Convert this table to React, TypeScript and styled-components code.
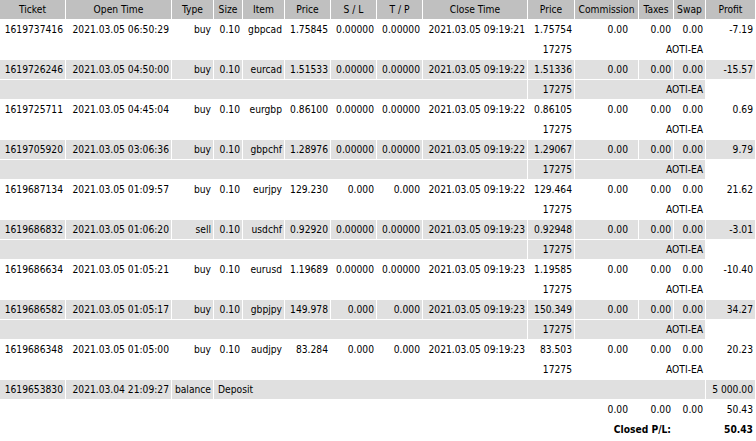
import styled, { createGlobalStyle } from "styled-components";

const GlobalStyle = createGlobalStyle`
  html, body {
    margin: 0;
    padding: 0;
    background: #ffffff;
  }
  body {
    overflow: hidden;
  }
`;

type Trade = {
  ticket: string;
  openTime: string;
  type: string;
  size: string;
  item: string;
  price: string;
  sl: string;
  tp: string;
  closeTime: string;
  closePrice: string;
  profit: string;
};

// widths taken from the statement header (px)
const COLS = [65, 105, 41, 28, 41, 45, 45, 45, 104, 46, 63, 34, 31, 49];

const HEAD = [
  "Ticket",
  "Open Time",
  "Type",
  "Size",
  "Item",
  "Price",
  "S / L",
  "T / P",
  "Close Time",
  "Price",
  "Commission",
  "Taxes",
  "Swap",
  "Profit",
];

const trades: Trade[] = [
  { ticket: "1619737416", openTime: "2021.03.05 06:50:29", type: "buy", size: "0.10", item: "gbpcad", price: "1.75845", sl: "0.00000", tp: "0.00000", closeTime: "2021.03.05 09:19:21", closePrice: "1.75754", profit: "-7.19" },
  { ticket: "1619726246", openTime: "2021.03.05 04:50:00", type: "buy", size: "0.10", item: "eurcad", price: "1.51533", sl: "0.00000", tp: "0.00000", closeTime: "2021.03.05 09:19:22", closePrice: "1.51336", profit: "-15.57" },
  { ticket: "1619725711", openTime: "2021.03.05 04:45:04", type: "buy", size: "0.10", item: "eurgbp", price: "0.86100", sl: "0.00000", tp: "0.00000", closeTime: "2021.03.05 09:19:22", closePrice: "0.86105", profit: "0.69" },
  { ticket: "1619705920", openTime: "2021.03.05 03:06:36", type: "buy", size: "0.10", item: "gbpchf", price: "1.28976", sl: "0.00000", tp: "0.00000", closeTime: "2021.03.05 09:19:22", closePrice: "1.29067", profit: "9.79" },
  { ticket: "1619687134", openTime: "2021.03.05 01:09:57", type: "buy", size: "0.10", item: "eurjpy", price: "129.230", sl: "0.000", tp: "0.000", closeTime: "2021.03.05 09:19:22", closePrice: "129.464", profit: "21.62" },
  { ticket: "1619686832", openTime: "2021.03.05 01:06:20", type: "sell", size: "0.10", item: "usdchf", price: "0.92920", sl: "0.00000", tp: "0.00000", closeTime: "2021.03.05 09:19:23", closePrice: "0.92948", profit: "-3.01" },
  { ticket: "1619686634", openTime: "2021.03.05 01:05:21", type: "buy", size: "0.10", item: "eurusd", price: "1.19689", sl: "0.00000", tp: "0.00000", closeTime: "2021.03.05 09:19:23", closePrice: "1.19585", profit: "-10.40" },
  { ticket: "1619686582", openTime: "2021.03.05 01:05:17", type: "buy", size: "0.10", item: "gbpjpy", price: "149.978", sl: "0.000", tp: "0.000", closeTime: "2021.03.05 09:19:23", closePrice: "150.349", profit: "34.27" },
  { ticket: "1619686348", openTime: "2021.03.05 01:05:00", type: "buy", size: "0.10", item: "audjpy", price: "83.284", sl: "0.000", tp: "0.000", closeTime: "2021.03.05 09:19:23", closePrice: "83.503", profit: "20.23" },
];

const App = () => {
  return (
    <>
      <GlobalStyle />
      <Table>
        <colgroup>
          {COLS.map((w, i) => (
            <col key={i} style={{ width: w }} />
          ))}
        </colgroup>
        <thead>
          <Row>
            {HEAD.map((h, i) => (
              <HeadCell key={i}>{h}</HeadCell>
            ))}
          </Row>
        </thead>
        <tbody>
          {trades.map((t, i) => {
            const shade = i % 2 === 1;
            return [
              <Row key={t.ticket} $shade={shade}>
                <Cell>{t.ticket}</Cell>
                <Cell>{t.openTime}</Cell>
                <Cell>{t.type}</Cell>
                <Cell>{t.size}</Cell>
                <Cell>{t.item}</Cell>
                <Cell>{t.price}</Cell>
                <Cell>{t.sl}</Cell>
                <Cell>{t.tp}</Cell>
                <Cell>{t.closeTime}</Cell>
                <Cell>{t.closePrice}</Cell>
                <Cell $wide>0.00</Cell>
                <Cell>0.00</Cell>
                <Cell>0.00</Cell>
                <Cell>{t.profit}</Cell>
              </Row>,
              <Row key={t.ticket + "-c"} $shade={shade}>
                <Cell colSpan={9} />
                <Cell>17275</Cell>
                <Cell colSpan={3}>AOTI-EA</Cell>
                <Cell $bare />
              </Row>,
            ];
          })}
          <Row $shade>
            <Cell>1619653830</Cell>
            <Cell>2021.03.04 21:09:27</Cell>
            <Cell>balance</Cell>
            <Cell colSpan={10} $left>
              Deposit
            </Cell>
            <Cell>5 000.00</Cell>
          </Row>
          <Row>
            <Cell colSpan={10} />
            <Cell $wide>0.00</Cell>
            <Cell>0.00</Cell>
            <Cell>0.00</Cell>
            <Cell>50.43</Cell>
          </Row>
          <Row>
            <Cell colSpan={10} />
            <Cell colSpan={2} $bold>
              Closed P/L:
            </Cell>
            <Cell />
            <Cell $bold>50.43</Cell>
          </Row>
        </tbody>
      </Table>
    </>
  );
};

export default App;

const Table = styled.table`
  table-layout: fixed;
  width: 757px;
  margin: -1px 0 0 -1px;
  border-collapse: separate;
  border-spacing: 1px;
  background: #ffffff;
  font-family: "DejaVu Sans Condensed", "DejaVu Sans", "Liberation Sans", sans-serif;
  font-stretch: condensed;
  font-size: 10.2px;
  color: #000000;
`;

const Row = styled.tr<{ $shade?: boolean }>`
  background: ${({ $shade }) => ($shade ? "#e0e0e0" : "transparent")};
`;

const HeadCell = styled.th`
  height: 19px;
  padding: 0 2px;
  background: #c0c0c0;
  font-weight: normal;
  text-align: center;
  white-space: nowrap;
  overflow: hidden;
`;

const Cell = styled.td<{ $left?: boolean; $bold?: boolean; $wide?: boolean; $bare?: boolean }>`
  height: 19px;
  padding: 0 ${({ $wide }) => ($wide ? "10px" : "2px")} 0 ${({ $left }) => ($left ? "4px" : "2px")};
  text-align: ${({ $left }) => ($left ? "left" : "right")};
  font-weight: ${({ $bold }) => ($bold ? "bold" : "normal")};
  white-space: nowrap;
  overflow: hidden;
  ${({ $bare }) => ($bare ? "background: #ffffff;" : "")}
`;
